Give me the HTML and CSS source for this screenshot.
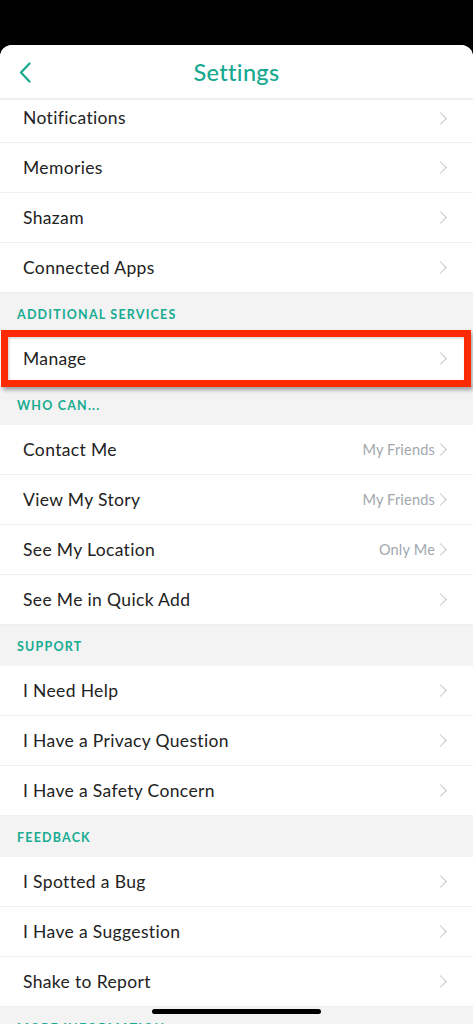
FILE: index.html
```html
<!DOCTYPE html>
<html lang="en">
<head>
    <meta charset="UTF-8">
    <meta name="viewport" content="width=device-width, initial-scale=1.0">
    <title>Settings</title>
    <link rel="stylesheet" href="styles.css">
</head>
<body>
    <div class="sheet">
        <header class="topbar">
            <svg class="back" width="12" height="21" viewBox="0 0 12 21"><path d="M10.5 1.5 L2 10.5 L10.5 19.5" fill="none" stroke="#16a98f" stroke-width="2.2" stroke-linecap="round" stroke-linejoin="round"/></svg>
            <h1>Settings</h1>
        </header>

        <div class="scroll">
            <div class="list">
                <div class="row first"><span class="label">Notifications</span><span class="chev"></span></div>
                <div class="row"><span class="label">Memories</span><span class="chev"></span></div>
                <div class="row"><span class="label">Shazam</span><span class="chev"></span></div>
                <div class="row"><span class="label">Connected Apps</span><span class="chev"></span></div>

                <div class="section">Additional Services</div>
                <div class="row marked"><span class="label">Manage</span><span class="chev"></span><span class="highlight"></span></div>

                <div class="section">Who Can...</div>
                <div class="row"><span class="label">Contact Me</span><span class="value">My Friends</span><span class="chev"></span></div>
                <div class="row"><span class="label">View My Story</span><span class="value">My Friends</span><span class="chev"></span></div>
                <div class="row"><span class="label">See My Location</span><span class="value">Only Me</span><span class="chev"></span></div>
                <div class="row"><span class="label">See Me in Quick Add</span><span class="chev"></span></div>

                <div class="section">Support</div>
                <div class="row"><span class="label">I Need Help</span><span class="chev"></span></div>
                <div class="row"><span class="label">I Have a Privacy Question</span><span class="chev"></span></div>
                <div class="row"><span class="label">I Have a Safety Concern</span><span class="chev"></span></div>

                <div class="section">Feedback</div>
                <div class="row"><span class="label">I Spotted a Bug</span><span class="chev"></span></div>
                <div class="row"><span class="label">I Have a Suggestion</span><span class="chev"></span></div>
                <div class="row"><span class="label">Shake to Report</span><span class="chev"></span></div>

                <div class="section">More Information</div>
            </div>
        </div>

        <div class="home-bar"></div>
    </div>
</body>
</html>
```

FILE: styles.css
```css
body {
    margin: 0;
    background: #000;
    font-family: 'Lato', 'Noto Sans', sans-serif;
    height: 1024px;
    overflow: hidden;
}
.sheet {
    margin-top: 45px;
    height: 979px;
    background: #fff;
    border-radius: 12px 12px 0 0;
    overflow: hidden;
    display: flex;
    flex-direction: column;
    position: relative;
}
.topbar {
    height: 53px;
    flex: none;
    display: flex;
    align-items: center;
    justify-content: center;
    border-bottom: 2px solid #eeeeee;
    background: #fff;
    position: relative;
    z-index: 1;
}
.back {
    position: absolute;
    left: 19px;
    top: 17px;
}
h1 {
    margin: 0;
    font-size: 23.5px;
    font-weight: 500;
    color: #16a98f;
    letter-spacing: 0.3px;
}
.scroll {
    flex: 1;
    overflow: hidden;
    background: #f3f3f3;
}
.list {
    display: flex;
    flex-direction: column;
}
.row {
    height: 49px;
    flex: none;
    display: flex;
    align-items: center;
    padding: 0 25px 0 23px;
    background: #fff;
    border-bottom: 1px solid #efefef;
    font-size: 17.5px;
    letter-spacing: 0.35px;
    color: #222;
}
.row.first {
    height: 42px;
    align-items: flex-start;
    line-height: 36px;
}
.label {
    flex: 1;
}
.value {
    font-size: 14.5px;
    letter-spacing: 0.2px;
    color: #a2a7ad;
    margin-right: 1px;
}
.chev {
    width: 8px;
    height: 8px;
    border-top: 1.6px solid #c6c6c9;
    border-right: 1.6px solid #c6c6c9;
    transform: rotate(45deg);
    margin-right: 3px;
}
.row.first .chev {
    margin-top: 14px;
}
.section {
    height: 41px;
    flex: none;
    box-sizing: border-box;
    padding: 14px 17px 0;
    font-size: 12.5px;
    font-weight: 700;
    letter-spacing: 1.2px;
    text-transform: uppercase;
    color: #17ab91;
    background: #f3f3f3;
}
.marked {
    position: relative;
}
.highlight {
    position: absolute;
    left: 1px;
    right: 2px;
    top: -4px;
    bottom: -4px;
    border: 7px solid #ff2a00;
    box-shadow: 2px 3px 4px rgba(0, 0, 0, 0.35), inset 1px 1px 3px rgba(0, 0, 0, 0.2);
}
.home-bar {
    position: absolute;
    left: 152px;
    bottom: 10px;
    width: 169px;
    height: 5px;
    border-radius: 3px;
    background: #000;
}
```
